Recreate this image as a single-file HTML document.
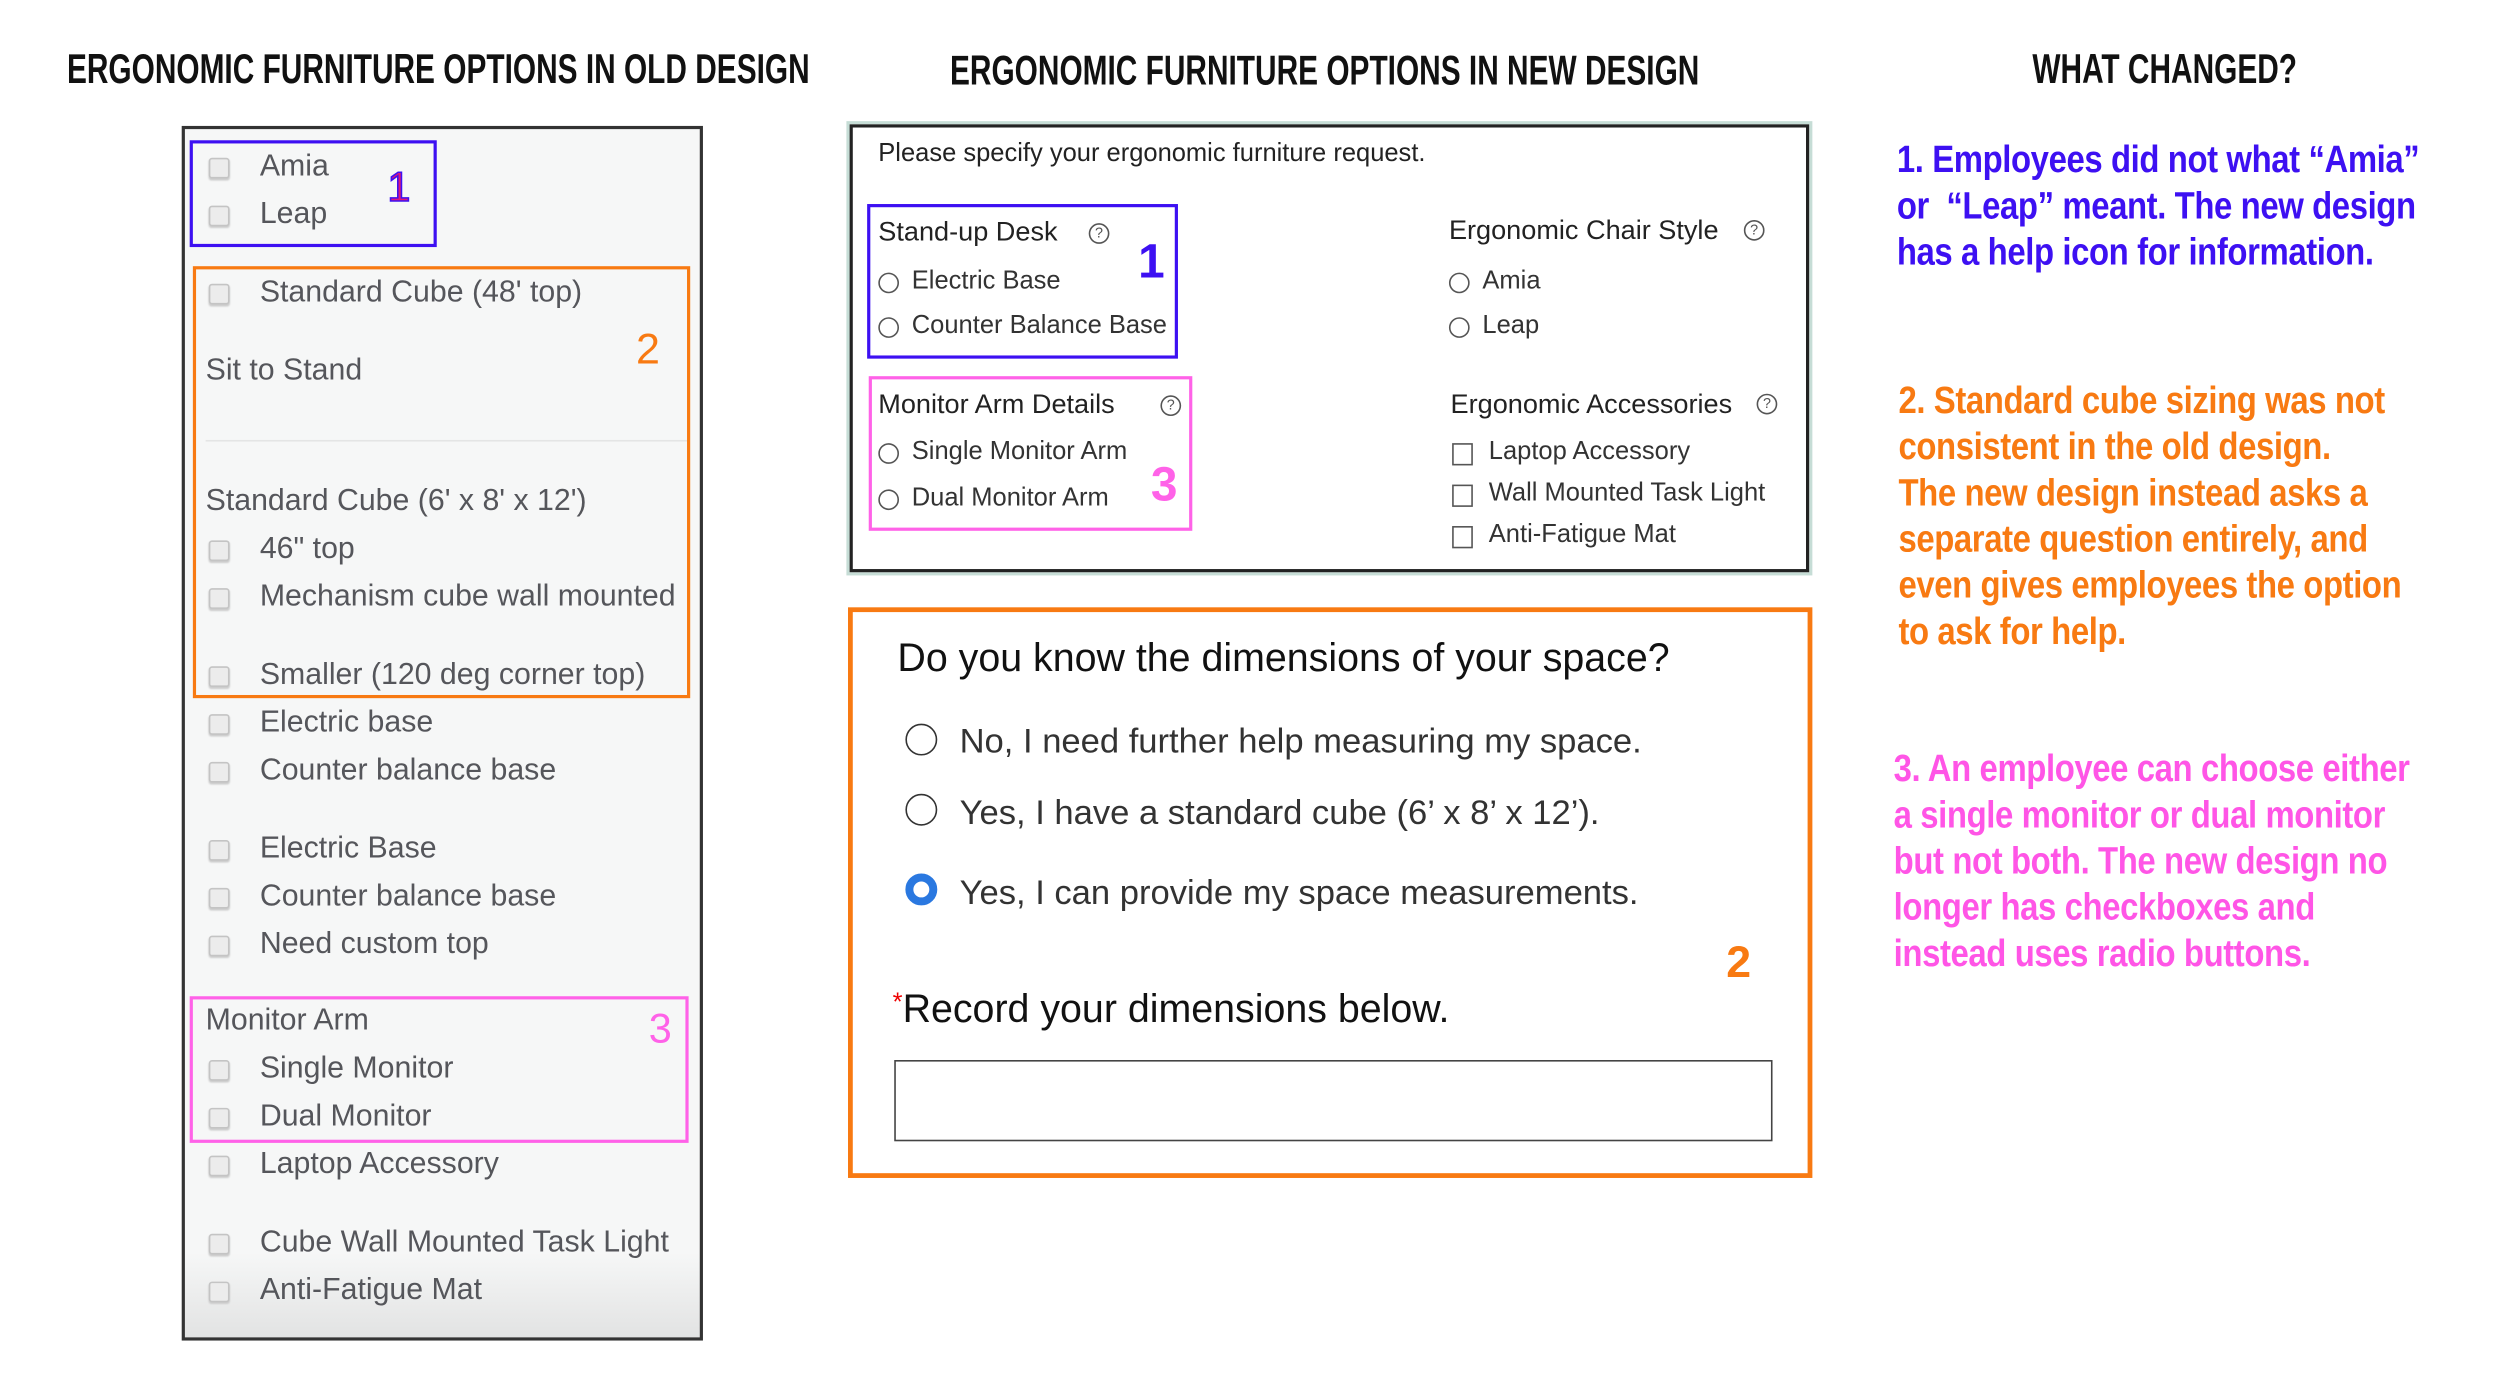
<!DOCTYPE html>
<html><head><meta charset="utf-8"><style>
html,body{margin:0;padding:0;background:#fff;}
body{width:2500px;height:1392px;overflow:hidden;position:relative;}
#w{position:absolute;left:0;top:0;width:1570px;height:875px;transform:scale(1.594);transform-origin:0 0;font-family:"Liberation Sans",sans-serif;}
.t{position:absolute;white-space:nowrap;line-height:1;}
.h{font-weight:bold;font-size:26px;color:#111;transform:scaleX(.72);transform-origin:left center;}
.o{font-size:19px;color:#55565b;}
.cb{position:absolute;left:131px;width:11px;height:11px;border:1px solid #c4c4c4;border-radius:2px;background:#ececec;box-shadow:0 1px 1px #ccc;}
.box{position:absolute;box-sizing:border-box;}
.m{font-size:16px;color:#333;}
.mh{font-size:17px;color:#222;}
.rd{position:absolute;width:11px;height:11px;border:1.2px solid #555;border-radius:50%;}
.sq{position:absolute;width:11px;height:12px;border:1.2px solid #555;}
.q{position:absolute;width:11px;height:11px;border:1.2px solid #555;border-radius:50%;font-size:9px;line-height:11px;text-align:center;color:#555;}
.n{font-weight:bold;}
.r{font-weight:bold;font-size:24px;line-height:29px;position:absolute;white-space:nowrap;letter-spacing:-0.3px;transform:scaleX(.86);transform-origin:left top;}
</style></head><body><div id="w">

<div class="t h" style="left:42px;top:30px;">ERGONOMIC FURNITURE OPTIONS IN OLD DESIGN</div>
<div class="t h" style="left:596px;top:31px;">ERGONOMIC FURNITURE OPTIONS IN NEW DESIGN</div>
<div class="t h" style="left:1275px;top:30px;">WHAT CHANGED?</div>

<div class="box" style="left:114px;top:79px;width:327px;height:762px;border:2px solid #333;background:linear-gradient(#f6f7f7 93%,#e2e3e3);"></div>
<div class="box" style="left:129px;top:276px;width:303px;height:1px;background:#e4e5e5;"></div>
<div class="cb" style="top:99px"></div><div class="t o" style="left:163px;top:95px">Amia</div>
<div class="cb" style="top:129px"></div><div class="t o" style="left:163px;top:125px">Leap</div>
<div class="cb" style="top:178px"></div><div class="t o" style="left:163px;top:174px">Standard Cube (48' top)</div>
<div class="t o" style="left:129px;top:223px">Sit to Stand</div>
<div class="t o" style="left:129px;top:305px">Standard Cube (6' x 8' x 12')</div>
<div class="cb" style="top:339px"></div><div class="t o" style="left:163px;top:335px">46" top</div>
<div class="cb" style="top:369px"></div><div class="t o" style="left:163px;top:365px">Mechanism cube wall mounted</div>
<div class="cb" style="top:418px"></div><div class="t o" style="left:163px;top:414px">Smaller (120 deg corner top)</div>
<div class="cb" style="top:448px"></div><div class="t o" style="left:163px;top:444px">Electric base</div>
<div class="cb" style="top:478px"></div><div class="t o" style="left:163px;top:474px">Counter balance base</div>
<div class="cb" style="top:527px"></div><div class="t o" style="left:163px;top:523px">Electric Base</div>
<div class="cb" style="top:557px"></div><div class="t o" style="left:163px;top:553px">Counter balance base</div>
<div class="cb" style="top:587px"></div><div class="t o" style="left:163px;top:583px">Need custom top</div>
<div class="t o" style="left:129px;top:631px">Monitor Arm</div>
<div class="cb" style="top:665px"></div><div class="t o" style="left:163px;top:661px">Single Monitor</div>
<div class="cb" style="top:695px"></div><div class="t o" style="left:163px;top:691px">Dual Monitor</div>
<div class="cb" style="top:725px"></div><div class="t o" style="left:163px;top:721px">Laptop Accessory</div>
<div class="cb" style="top:774px"></div><div class="t o" style="left:163px;top:770px">Cube Wall Mounted Task Light</div>
<div class="cb" style="top:804px"></div><div class="t o" style="left:163px;top:800px">Anti-Fatigue Mat</div>

<div class="box" style="left:119px;top:88px;width:155px;height:67px;border:2.5px solid #3d10f2;"></div>
<div class="t" style="left:243px;top:104px;font-size:26px;color:#e0167a;-webkit-text-stroke:1px #3d10f2">1</div>
<div class="box" style="left:121px;top:167px;width:312px;height:271px;border:2.5px solid #f87a12;"></div>
<div class="t" style="left:399px;top:206px;font-size:27px;color:#f87a12">2</div>
<div class="box" style="left:119px;top:625px;width:313px;height:92px;border:2.5px solid #ff62e8;"></div>
<div class="t" style="left:407px;top:632px;font-size:26px;color:#ff62e8">3</div>

<div class="box" style="left:531px;top:76px;width:606px;height:285px;border:2px solid #c6ddd6;"></div>
<div class="box" style="left:533px;top:78px;width:602px;height:281px;border:2px solid #222;background:#fff;"></div>
<div class="t m" style="left:551px;top:89px;color:#222">Please specify your ergonomic furniture request.</div>
<div class="t mh" style="left:551px;top:137px">Stand-up Desk</div><div class="q" style="left:683px;top:140px">?</div>
<div class="rd" style="left:551px;top:171px"></div><div class="t m" style="left:572px;top:169px">Electric Base</div>
<div class="rd" style="left:551px;top:199px"></div><div class="t m" style="left:572px;top:197px">Counter Balance Base</div>
<div class="t mh" style="left:909px;top:136px">Ergonomic Chair Style</div><div class="q" style="left:1094px;top:138px">?</div>
<div class="rd" style="left:909px;top:171px"></div><div class="t m" style="left:930px;top:169px">Amia</div>
<div class="rd" style="left:909px;top:199px"></div><div class="t m" style="left:930px;top:197px">Leap</div>
<div class="t mh" style="left:551px;top:245px">Monitor Arm Details</div><div class="q" style="left:728px;top:248px">?</div>
<div class="rd" style="left:551px;top:278px"></div><div class="t m" style="left:572px;top:276px">Single Monitor Arm</div>
<div class="rd" style="left:551px;top:307px"></div><div class="t m" style="left:572px;top:305px">Dual Monitor Arm</div>
<div class="t mh" style="left:910px;top:245px">Ergonomic Accessories</div><div class="q" style="left:1102px;top:247px">?</div>
<div class="sq" style="left:911px;top:278px"></div><div class="t m" style="left:934px;top:276px">Laptop Accessory</div>
<div class="sq" style="left:911px;top:304px"></div><div class="t m" style="left:934px;top:302px">Wall Mounted Task Light</div>
<div class="sq" style="left:911px;top:330px"></div><div class="t m" style="left:934px;top:328px">Anti-Fatigue Mat</div>
<div class="box" style="left:544px;top:128px;width:195px;height:97px;border:2.5px solid #3d10f2;"></div>
<div class="t n" style="left:714px;top:150px;font-size:30px;color:#3d10f2">1</div>
<div class="box" style="left:545px;top:236px;width:203px;height:97px;border:2.5px solid #ff62e8;"></div>
<div class="t n" style="left:722px;top:290px;font-size:30px;color:#ff62e8">3</div>

<div class="box" style="left:532px;top:381px;width:605px;height:358px;border:3px solid #f87a12;"></div>
<div class="t" style="left:563px;top:402px;font-size:24.7px;color:#111">Do you know the dimensions of your space?</div>
<div class="rd" style="left:568px;top:454px;width:18px;height:18px;border-width:1.5px;border-color:#333"></div>
<div class="t" style="left:602px;top:454px;font-size:21.7px;color:#333">No, I need further help measuring my space.</div>
<div class="rd" style="left:568px;top:498px;width:18px;height:18px;border-width:1.5px;border-color:#333"></div>
<div class="t" style="left:602px;top:499px;font-size:21.7px;color:#333">Yes, I have a standard cube (6’ x 8’ x 12’).</div>
<div class="rd" style="left:568px;top:548px;width:10px;height:10px;border:5px solid #2a78e0;background:#fff"></div>
<div class="t" style="left:602px;top:549px;font-size:21.7px;color:#333">Yes, I can provide my space measurements.</div>
<div class="t n" style="left:1083px;top:590px;font-size:28px;color:#f87a12">2</div>
<div class="t" style="left:560px;top:622px;font-size:24.7px;color:#111"><span style="color:#e00;font-size:16px;vertical-align:top">*</span>Record your dimensions below.</div>
<div class="box" style="left:561px;top:665px;width:551px;height:51px;border:1.5px solid #444;"></div>

<div class="r" style="left:1190px;top:86px;color:#3d10f2">1. Employees did not what “Amia”<br>or&nbsp; “Leap” meant. The new design<br>has a help icon for information.</div>
<div class="r" style="left:1191px;top:237px;color:#f87a12">2. Standard cube sizing was not<br>consistent in the old design.<br>The new design instead asks a<br>separate question entirely, and<br>even gives employees the option<br>to ask for help.</div>
<div class="r" style="left:1188px;top:468px;color:#ff55e6">3. An employee can choose either<br>a single monitor or dual monitor<br>but not both. The new design no<br>longer has checkboxes and<br>instead uses radio buttons.</div>

</div></body></html>
